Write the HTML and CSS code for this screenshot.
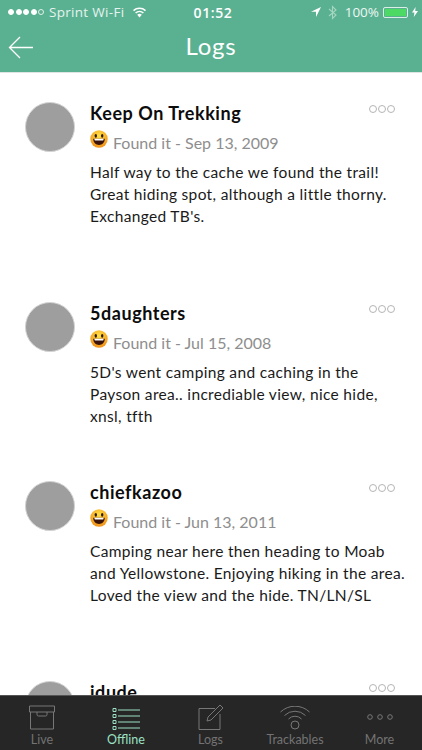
FILE: index.html
```html
<!DOCTYPE html>
<html lang="en">
<head>
<meta charset="utf-8">
<title>Logs</title>
<link rel="stylesheet" href="styles.css">
</head>
<body>
<div class="app">
  <header class="header">
    <div class="status">
      <div class="status-left">
        <span class="signal"><i></i><i></i><i></i><i></i><i class="off"></i></span>
        <span>Sprint Wi-Fi</span>
        <svg class="wifi" width="15" height="11" viewBox="0 0 15 11"><path d="M7.5 10.5 5.2 7.8a3.4 3.4 0 0 1 4.6 0Z" fill="#fff"/><path d="M3.6 6a5.9 5.9 0 0 1 7.8 0M1.5 3.6a9 9 0 0 1 12 0" fill="none" stroke="#fff" stroke-width="1.5"/></svg>
      </div>
      <div class="status-time">01:52</div>
      <div class="status-right">
        <svg width="10" height="10" viewBox="0 0 10 10"><path d="M10 0 0 4.8h5V10Z" fill="#fff"/></svg>
        <svg class="bt" width="9" height="15" viewBox="0 0 9 15"><path d="M1 4l7 6-3.5 3.5v-12L8 5l-7 6" fill="none" stroke="#a5d6c2" stroke-width="1.1"/></svg>
        <span class="pct">100%</span>
        <span class="battery"><span class="battery-fill"></span></span>
        <svg width="6" height="10" viewBox="0 0 6 10"><path d="M3.6 0 0 5.6h2.4L1.8 10 6 3.9H3.2Z" fill="#fff"/></svg>
      </div>
    </div>
    <div class="navbar">
      <svg class="back" width="26" height="24" viewBox="0 0 26 24"><path d="M25 12.5H2M12 2 1.500 12.500 12 23" fill="none" stroke="#fff" stroke-width="1.300"/></svg>
      <h1 class="title">Logs</h1>
    </div>
  </header>
  <main class="list">
    <article class="log">
      <div class="avatar"></div>
      <div class="log-body">
        <h2 class="name">Keep On Trekking</h2>
        <div class="meta"><svg class="emoji" width="18" height="18" viewBox="0 0 18 18"><use href="#smile"/></svg><span>Found it - Sep 13, 2009</span></div>
        <p class="text">Half way to the cache we found the trail!<br>Great hiding spot, although a little thorny.<br>Exchanged TB's.</p>
      </div>
      <div class="dots"><i></i><i></i><i></i></div>
    </article>
    <article class="log log-short">
      <div class="avatar"></div>
      <div class="log-body">
        <h2 class="name">5daughters</h2>
        <div class="meta"><svg class="emoji" width="18" height="18" viewBox="0 0 18 18"><use href="#smile"/></svg><span>Found it - Jul 15, 2008</span></div>
        <p class="text">5D's went camping and caching in the<br>Payson area.. incrediable view, nice hide,<br>xnsl, tfth</p>
      </div>
      <div class="dots"><i></i><i></i><i></i></div>
    </article>
    <article class="log">
      <div class="avatar"></div>
      <div class="log-body">
        <h2 class="name">chiefkazoo</h2>
        <div class="meta"><svg class="emoji" width="18" height="18" viewBox="0 0 18 18"><use href="#smile"/></svg><span>Found it - Jun 13, 2011</span></div>
        <p class="text">Camping near here then heading to Moab<br>and Yellowstone. Enjoying hiking in the area.<br>Loved the view and the hide. TN/LN/SL</p>
      </div>
      <div class="dots"><i></i><i></i><i></i></div>
    </article>
    <article class="log">
      <div class="avatar"></div>
      <div class="log-body">
        <h2 class="name">idude</h2>
      </div>
      <div class="dots"><i></i><i></i><i></i></div>
    </article>
  </main>
  <nav class="tabs">
    <a class="tab">
      <svg width="28" height="25" viewBox="0 0 28 25" fill="none" stroke="#777" stroke-width="1"><path d="M1.500 1h25v6h-25zM2.500 7v17h23V7M9 7v2.500q0 1.500 1.500 1.500h7q1.500 0 1.500-1.500V7"/></svg>
      <span>Live</span>
    </a>
    <a class="tab tab-on">
      <svg width="28" height="22" viewBox="0 0 28 22" fill="none" stroke="#9be0c4" stroke-width="1"><path d="M6 2h22M6 8h22M6 14h22M6 20h22M1 .5h3v3H1zM1 6.500h3v3H1zM1 12.500h3v3H1zM1 18.500h3v3H1z"/></svg>
      <span>Offline</span>
    </a>
    <a class="tab">
      <svg width="28" height="26" viewBox="0 0 28 26" fill="none" stroke="#777" stroke-width="1"><path d="M18 4.500H2v21h21V10M10 17l1-4L23 1l3 3-12 12Z"/></svg>
      <span>Logs</span>
    </a>
    <a class="tab">
      <svg width="32" height="24" viewBox="0 0 32 24" fill="none" stroke="#777" stroke-width="1"><circle cx="16" cy="19" r="4"/><path d="M9.500 13a9 9 0 0 1 13 0M5.500 9.500a15 15 0 0 1 21 0M1.500 6a21 21 0 0 1 29 0"/></svg>
      <span>Trackables</span>
    </a>
    <a class="tab">
      <svg width="26" height="26" viewBox="0 0 26 26" fill="none" stroke="#777" stroke-width="1"><circle cx="3" cy="13" r="2.300"/><circle cx="13" cy="13" r="2.300"/><circle cx="23" cy="13" r="2.300"/></svg>
      <span>More</span>
    </a>
  </nav>
</div>
<svg class="defs" width="0" height="0">
  <defs>
    <radialGradient id="face" cx="50%" cy="30%" r="75%"><stop offset="0" stop-color="#ffdf45"/><stop offset="1" stop-color="#f08a12"/></radialGradient>
    <symbol id="smile" viewBox="0 0 18 18">
      <circle cx="9" cy="9" r="8.700" fill="url(#face)"/>
      <ellipse cx="5.800" cy="5.800" rx="1.200" ry="1.900" fill="#2a1a08"/>
      <ellipse cx="12.200" cy="5.800" rx="1.200" ry="1.900" fill="#2a1a08"/>
      <path d="M3.200 8.800h11.600c0 3.500-2.500 6.200-5.800 6.200S3.200 12.300 3.200 8.800Z" fill="#3a1208"/>
      <path d="M4.200 8.800h9.600l-.6 1.600H4.800Z" fill="#fff"/>
    </symbol>
  </defs>
</svg>
</body>
</html>
```

FILE: styles.css
```css
* { box-sizing: border-box; }
html, body { margin: 0; height: 100%; }
body { font-family: Lato, "Noto Sans", sans-serif; color: #111; background: #fff; overflow: hidden; }
.app { height: 750px; display: flex; flex-direction: column; }
.defs { display: block; height: 0; }

.header { height: 73px; flex: none; background: #5ab192; color: #fff; border-bottom: 1px solid #dfe5e2; }
.status { height: 24px; display: grid; grid-template-columns: 1fr auto 1fr; align-items: center; padding: 0 4px 0 8px; font-family: "Open Sans", sans-serif; font-size: 13.500px; }
.status-left { display: flex; align-items: center; gap: 5px; color: #e6f3ee; letter-spacing: .3px; }
.signal { display: flex; gap: 1.500px; }
.signal i { width: 6px; height: 6px; border-radius: 50%; background: #fff; border: 1px solid #fff; }
.signal i.off { background: transparent; border-color: #e2f0ea; }
.wifi { margin-left: 3px; }
.status-time { font-size: 14px; font-weight: 600; letter-spacing: .6px; }
.status-right { display: flex; align-items: center; justify-content: flex-end; gap: 4px; }
.bt { margin: 0 4px 0 3px; }
.pct { color: #eef7f3; }
.battery { width: 25px; height: 11px; border: 1px solid #dcefe7; border-radius: 2px; padding: 1px; margin-left: 0; display: block; }
.battery-fill { display: block; height: 100%; background: #4cd964; }

.navbar { height: 47px; display: flex; align-items: center; justify-content: center; position: relative; }
.back { position: absolute; left: 8px; top: 11px; }
.title { margin: -5px 0 0; font-size: 24px; font-weight: 400; letter-spacing: .8px; }

.list { flex: 1; min-height: 0; overflow: hidden; padding-top: 29px; }
.log { height: 200px; display: flex; padding: 0 27px 0 25px; }
.log-short { height: 179px; }
.avatar { width: 50px; height: 50px; flex: none; border-radius: 50%; background: #9e9e9e; border: 1px solid #d3d3d3; }
.log-body { flex: 1; min-width: 0; padding-left: 15px; }
.name { margin: 0; font-size: 18px; line-height: 22px; font-weight: 700; letter-spacing: .55px; color: #0c0c0c; }
.meta { display: flex; align-items: flex-start; gap: 5px; margin-top: 6px; height: 25px; font-size: 16px; color: #8e8e8e; letter-spacing: 0; }
.meta span { padding-top: 3px; line-height: 20px; }
.emoji { flex: none; }
.text { margin: 6px 0 0; font-size: 15.500px; line-height: 22px; letter-spacing: .33px; color: #1a1a1a; white-space: nowrap; }
.dots { position: relative; top: 3px; display: flex; gap: 1px; height: 9px; flex: none; }
.dots i { width: 8px; height: 8px; border: 1px solid #b5b5b5; border-radius: 50%; display: block; }

.tabs { height: 55px; flex: none; display: grid; grid-template-columns: 84px 84px 85px 84px 85px; background: #262626; border-top: 1px solid #555; position: relative; }
.tab { display: flex; flex-direction: column; align-items: center; justify-content: flex-end; padding-bottom: 2px; color: #737373; font-size: 12.500px; line-height: 16px; gap: 2px; }
.tab-on { color: #9be0c4; }
```
